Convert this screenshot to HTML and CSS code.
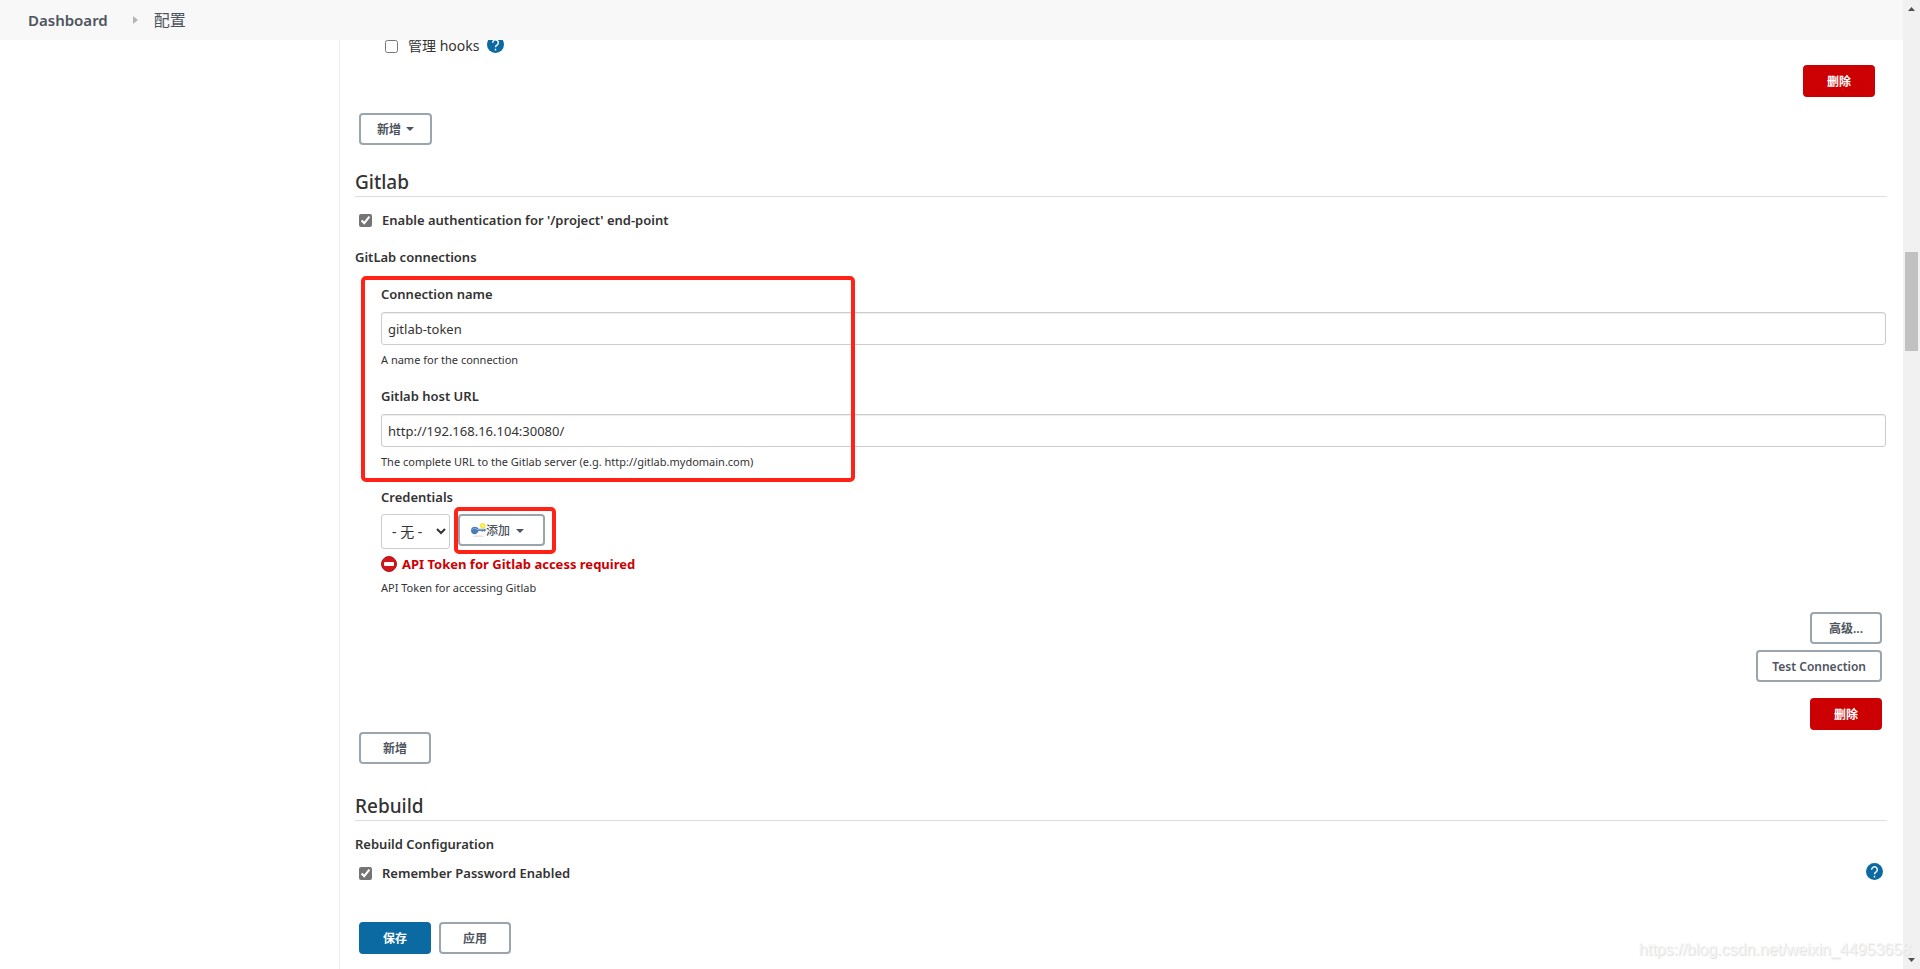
FILE: index.html
```html
<!DOCTYPE html>
<html lang="zh-CN">
<head>
<meta charset="utf-8">
<title>配置 [Jenkins]</title>
<link rel="stylesheet" href="styles.css">
</head>
<body>
<div class="window">
  <div class="page">
    <nav class="breadcrumbs" aria-label="breadcrumb">
      <a class="crumb crumb-home" href="#">Dashboard</a>
      <svg class="crumb-arrow" viewBox="0 0 5 8" aria-hidden="true"><path d="M0 0l5 4-5 4z"/></svg>
      <a class="crumb" href="#">配置</a>
    </nav>
    <div class="columns">
      <aside class="side-panel"></aside>
      <main class="config">
        <div class="check-row hooks-row">
          <input type="checkbox" id="hooks">
          <label for="hooks">管理 hooks</label>
          <button class="help" type="button" aria-label="Help">
            <svg viewBox="0 0 24 24"><circle cx="12" cy="12" r="12"/><path d="M8 9.400a4 4 0 1 1 6.400 3.200C13 13.600 12 14 12 15.800"/><path d="M12 18v2.400"/></svg>
          </button>
        </div>
        <div class="row-end server-delete"><button class="btn btn-danger" type="button">删除</button></div>
        <div class="row-start server-add"><button class="btn btn-menu" type="button">新增 <span class="caret"></span></button></div>

        <section>
          <h2 class="heading">Gitlab</h2>
          <div class="check-row auth-row">
            <input type="checkbox" id="auth" checked>
            <label for="auth">Enable authentication for '/project' end-point</label>
          </div>
          <div class="subtitle">GitLab connections</div>
          <div class="connection">
            <div class="marked">
              <div class="field">
                <label for="name">Connection name</label>
                <input class="text" type="text" id="name" value="gitlab-token">
                <p class="hint">A name for the connection</p>
              </div>
              <div class="field">
                <label for="url">Gitlab host URL</label>
                <input class="text" type="text" id="url" value="http://192.168.16.104:30080/">
                <p class="hint">The complete URL to the Gitlab server (e.g. http://gitlab.mydomain.com)</p>
              </div>
              <span class="mark mark-fields"></span>
            </div>
            <div class="field cred-field">
              <label for="cred">Credentials</label>
              <div class="cred-row">
                <select class="select" id="cred"><option>- 无 -</option></select>
                <div class="marked">
                  <button class="btn btn-add" type="button">
                    <svg class="key" viewBox="0 0 16 16" aria-hidden="true">
                      <ellipse class="key-shadow" cx="8" cy="14" rx="6" ry="1"/>
                      <path class="key-body" d="M4 4c2 0 3.200.8 3.800 2H15l1 1.500-1 1.500h-1l-1-.7-1 1.200-1-1H8C7.300 10.500 6 12 4 12 1.500 12 0 10.300 0 8s1.500-4 4-4z"/>
                      <path class="key-light" d="M1.500 7c1-1.800 3.500-1.800 5 0H14"/>
                      <circle class="key-spark" cx="12.500" cy="3" r="2"/>
                    </svg>添加 <span class="caret"></span>
                  </button>
                  <span class="mark mark-add"></span>
                </div>
              </div>
              <div class="error">
                <svg viewBox="0 0 16 16" aria-hidden="true"><circle class="stop" cx="8" cy="8" r="7.500"/><rect x="3" y="6" width="10" height="4" rx="1"/></svg>
                <span>API Token for Gitlab access required</span>
              </div>
              <p class="hint">API Token for accessing Gitlab</p>
            </div>
            <div class="actions">
              <button class="btn" type="button">高级...</button>
              <button class="btn" type="button">Test Connection</button>
              <button class="btn btn-danger" type="button">删除</button>
            </div>
          </div>
          <div class="row-start connection-add"><button class="btn" type="button">新增</button></div>
        </section>

        <section class="rebuild">
          <h2 class="heading">Rebuild</h2>
          <div class="subtitle">Rebuild Configuration</div>
          <div class="check-row remember-row">
            <input type="checkbox" id="remember" checked>
            <label for="remember">Remember Password Enabled</label>
            <button class="help" type="button" aria-label="Help">
              <svg viewBox="0 0 24 24"><circle cx="12" cy="12" r="12"/><path d="M8 9.400a4 4 0 1 1 6.400 3.200C13 13.600 12 14 12 15.800"/><path d="M12 18v2.400"/></svg>
            </button>
          </div>
        </section>

        <div class="row-start save-bar">
          <button class="btn btn-primary" type="button">保存</button>
          <button class="btn" type="button">应用</button>
        </div>
      </main>
    </div>
  </div>
  <div class="scrollbar" aria-hidden="true">
    <svg class="scroll-arrow" viewBox="0 0 7 4"><path d="M0 4l3.500-4L7 4z"/></svg>
    <div class="scroll-track"><div class="scroll-thumb"></div></div>
    <svg class="scroll-arrow" viewBox="0 0 7 4"><path d="M0 0l3.500 4L7 0z"/></svg>
  </div>
  <div class="watermark">https://blog.csdn.net/weixin_44953658</div>
</div>
</body>
</html>
```
FILE: styles.css
```css
* { box-sizing: border-box; }

body {
  margin: 0;
  background: #fff;
  color: #333;
  font: 13px/20px "Noto Sans", "Noto Sans CJK SC", sans-serif;
}

button, input, select { font-family: inherit; margin: 0; }
p, h2 { margin: 0; }

.window {
  position: relative;
  display: flex;
  min-height: 100vh;
}

.page {
  flex: 1;
  min-width: 0;
  display: flex;
  flex-direction: column;
}

/* Breadcrumb bar */
.breadcrumbs {
  display: flex;
  align-items: center;
  height: 40px;
  padding-left: 28px;
  background: #f8f8f8;
}
.crumb { color: #4d545d; font-size: 16px; text-decoration: none; }
.crumb-home { font-size: 15px; font-weight: 600; }
.crumb-arrow { width: 5px; height: 8px; margin: 0 16px 0 25px; fill: #b4b4b4; }

.columns { flex: 1; display: flex; overflow: hidden; }
.side-panel { flex: none; width: 339px; }
.config {
  flex: 1;
  min-width: 0;
  padding: 0 16px 8px 15px;
  border-left: 1px solid #eaeff2;
}

/* Buttons */
.btn {
  min-width: 72px;
  height: 32px;
  padding: 1px 14px 0;
  border: 2px solid #9aa5ae;
  border-radius: 4px;
  background: #fff;
  color: #4d545d;
  font-size: 12px;
  font-weight: 600;
  line-height: 20px;
}
.btn-menu { padding: 1px 16px 0; }
.btn-primary { background: #0b6aa2; border-color: #0b6aa2; color: #fff; }
.btn-danger { background: #cc0003; border-color: #cc0003; color: #fff; }
.caret {
  display: inline-block;
  margin-left: 2px;
  border: 4px solid transparent;
  border-top-color: #4d545d;
  border-bottom: 0;
  vertical-align: 3px;
}

.row-start { display: flex; gap: 8px; padding-left: 4px; }
.row-end { display: flex; justify-content: flex-end; padding-right: 12px; }

/* Checkbox rows */
.check-row { display: flex; align-items: center; padding-left: 4px; }
.check-row label { margin-left: 10px; font-weight: 600; }
.check-row input { width: 13px; height: 13px; accent-color: #757575; }
.help {
  align-self: flex-start;
  width: 17px;
  height: 17px;
  margin-left: 8px;
  padding: 0;
  border: 0;
  background: none;
}
.help svg { display: block; width: 17px; height: 17px; }
.help circle { fill: #0b6aa2; }
.help path { fill: none; stroke: #fff; stroke-width: 2; }

.hooks-row { margin-top: -4px; padding-left: 30px; }
.check-row.hooks-row label { font-size: 14px; font-weight: 400; }
.auth-row { margin-top: 13px; }
.remember-row { margin-top: 9px; }
.remember-row .help { margin: 0 4px 0 auto; }

.server-delete { margin-top: 9px; }
.server-add { margin: 16px 0 23px; }

.heading {
  border-bottom: 1px solid #ddd;
  font-size: 19px;
  font-weight: 500;
  line-height: 28px;
}
.subtitle { margin-top: 17px; font-weight: 600; }
.rebuild .subtitle { margin-top: 13px; }

/* Connection form */
.connection { padding: 0 1px 0 26px; }
.field { padding-top: 17px; }
.cred-field { padding-top: 16px; }
.field label { display: block; font-weight: 600; }
.text {
  display: block;
  width: 100%;
  height: 33px;
  margin: 8px 0 6px;
  padding: 0 6px;
  border: 1px solid #ccc;
  border-radius: 3px;
  box-shadow: inset 0 1px 1px rgba(0, 0, 0, 0.075);
  color: #333;
  font-size: 13px;
}
.hint { font-size: 11px; line-height: 18px; }

.cred-row { display: flex; gap: 8px; margin-top: 7px; }
.select {
  width: 69px;
  height: 35px;
  padding: 0 0 0 6px;
  border: 1px solid #ccc;
  border-radius: 3px;
  background: #fff;
  color: #333;
  font-size: 14px;
}
.btn-add { display: flex; align-items: center; width: 87px; padding: 1px 11px 0; font-weight: 500; }
.btn-add .caret { margin-left: 6px; }
.key { width: 15px; height: 15px; }
.key-shadow { fill: #e4e4e4; }
.key-body { fill: #4a7cb8; }
.key-light { fill: none; stroke: #8db4de; }
.key-spark { fill: #fffde0; stroke: #f7e83c; stroke-width: 2; }

.error {
  display: flex;
  align-items: center;
  gap: 5px;
  margin: 5px 0;
  color: #cc0003;
  font-weight: 700;
}
.error svg { width: 16px; height: 16px; }
.error .stop { fill: #d4151b; stroke: #a5191b; stroke-width: 1; }
.error rect { fill: #fff; }

.actions {
  display: flex;
  flex-direction: column;
  align-items: flex-end;
  gap: 6px;
  margin-top: 15px;
  padding-right: 4px;
}
.actions .btn-danger { margin-top: 10px; }
.connection-add { margin: 2px 0 28px; }
.save-bar { margin-top: 39px; }

/* Red annotation frames */
.marked { position: relative; }
.mark {
  position: absolute;
  border: 4px solid #ff2216;
  border-radius: 5px;
  pointer-events: none;
}
.mark-fields { top: 9px; bottom: -11px; left: -20px; width: 494px; }
.mark-add { top: -7px; left: -4px; width: 102px; height: 47px; }

/* Scrollbar */
.scrollbar {
  flex: none;
  display: flex;
  flex-direction: column;
  align-items: center;
  width: 17px;
  padding: 7px 0;
  background: #f1f1f1;
}
.scroll-arrow { width: 7px; height: 4px; fill: #505050; }
.scroll-track { flex: 1; padding-top: 241px; }
.scroll-thumb { width: 13px; height: 99px; background: #c1c1c1; }

.watermark {
  position: absolute;
  right: 9px;
  bottom: 9px;
  color: #f4f4f4;
  font: 16px/20px "Liberation Sans", sans-serif;
  text-shadow: 1px 1px 1px #ddd;
}
```
